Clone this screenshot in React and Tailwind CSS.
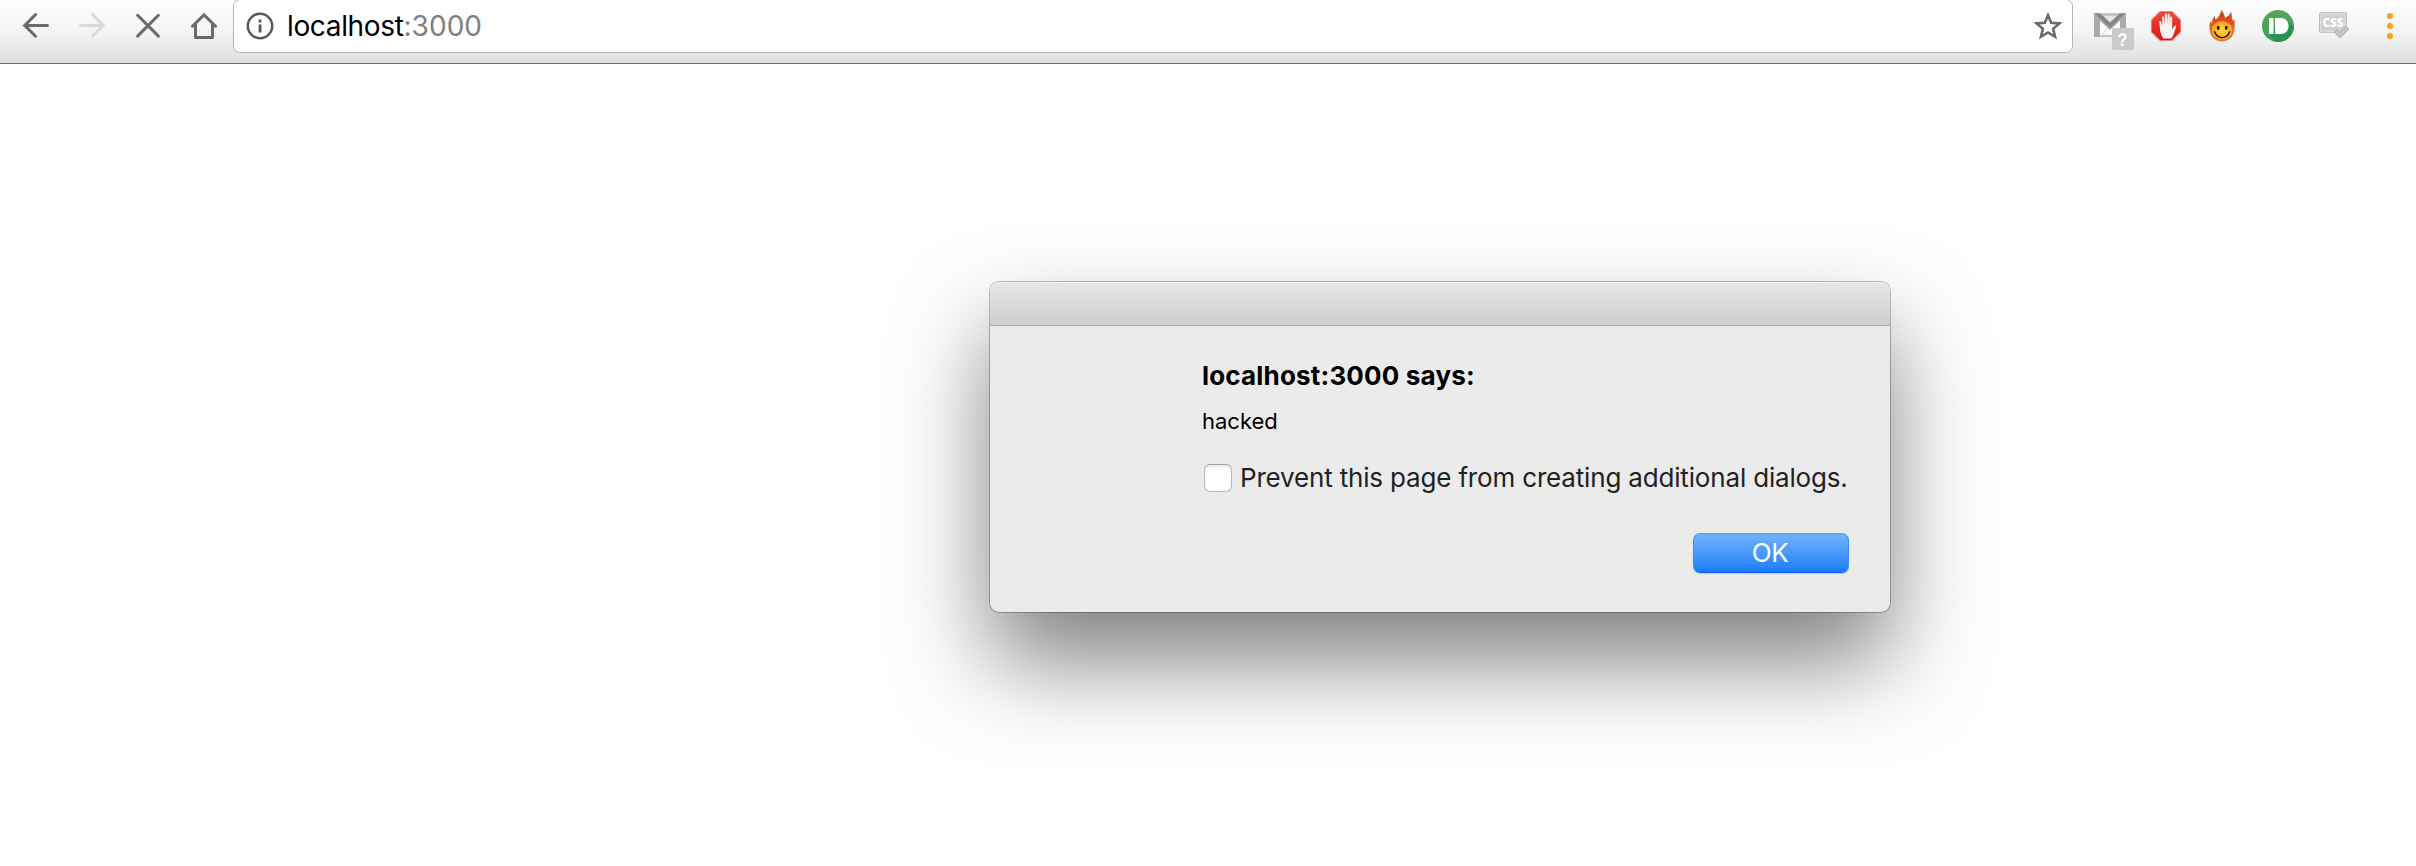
function NavCell({ children }) {
  return <div className="flex h-[63px] w-14 shrink-0 items-start justify-center">{children}</div>;
}

function BackIcon() {
  return (
    <svg viewBox="0 0 56 63" className="h-[63px] w-14" fill="none" stroke="#6a6a6a" strokeWidth="3" strokeLinecap="round">
      <path d="M39.5 25.4H16.5M27.5 14.6L16.7 25.4L27.5 36.2" />
    </svg>
  );
}

function ForwardIcon() {
  return (
    <svg viewBox="0 0 56 63" className="h-[63px] w-14" fill="none" stroke="#d9d9d9" strokeWidth="3" strokeLinecap="round">
      <path d="M16.5 25.4H39.5M28.5 14.6L39.3 25.4L28.5 36.2" />
    </svg>
  );
}

function StopIcon() {
  return (
    <svg viewBox="0 0 56 63" className="h-[63px] w-14" fill="none" stroke="#6a6a6a" strokeWidth="3" strokeLinecap="round">
      <path d="M17.6 15.3L38.4 36.1M38.4 15.3L17.6 36.1" />
    </svg>
  );
}

function HomeIcon() {
  return (
    <svg viewBox="0 0 56 63" className="h-[63px] w-14" fill="none" stroke="#6a6a6a" strokeWidth="3" strokeLinecap="round">
      <path d="M16.4 26.3L28 14.9L39.6 26.3" />
      <path d="M19.5 25V37.5H36.5V25" strokeLinejoin="round" />
    </svg>
  );
}

function InfoIcon() {
  return (
    <svg viewBox="0 0 28 28" className="h-7 w-7" fill="none">
      <circle cx="14" cy="14" r="12.2" stroke="#5a5a5a" strokeWidth="2.5" />
      <path d="M12.6 7.6h2.9v2.9h-2.9zM12.6 12.6h2.9v7.8h-2.9z" fill="#5a5a5a" />
    </svg>
  );
}

function StarIcon() {
  return (
    <svg viewBox="0 0 30 30" className="h-[30px] w-[30px]" fill="none" stroke="#6a6a6a" strokeWidth="2.6">
      <path d="M15 4.2L18.2 11.7L26.4 12.4L20.2 17.8L22.1 25.8L15 21.5L7.9 25.8L9.8 17.8L3.6 12.4L11.8 11.7Z" />
    </svg>
  );
}

function MailIcon() {
  return (
    <svg viewBox="0 0 56 63" className="h-[63px] w-14">
      <g transform="translate(10 0)">
        <rect x="2" y="13" width="32" height="24" fill="#c4c4c4" />
        <path d="M8 35V20L18 29L28 20V35Z" fill="#fbfbfb" />
        <path d="M8 16H28L18 25Z" fill="#e6e6e6" />
        <path d="M2 13H8L18 22L28 13H34V37H28V20.5L18 30L8 20.5V37H2Z" fill="#a9a9a9" />
        <path d="M3 13.5L8.5 14L18 23L27.5 14L33 13.5L18 28Z" fill="#858585" />
        <path d="M10 35.5L15 28.5M26 35.5L21 28.5" stroke="#d8d8d8" strokeWidth="1.2" />
        <rect x="20" y="28" width="22" height="22" rx="2" fill="#cacaca" />
        <text x="30.5" y="46.2" textAnchor="middle" fontFamily="Liberation Sans, sans-serif" fontWeight="700" fontSize="18" textLength="10" lengthAdjust="spacingAndGlyphs" fill="#fff">?</text>
      </g>
    </svg>
  );
}

function BlockIcon() {
  return (
    <svg viewBox="0 0 56 63" className="h-[63px] w-14">
      <defs>
        <linearGradient id="block" x1="0" y1="0" x2="0" y2="1">
          <stop offset="0" stopColor="#f5453a" />
          <stop offset="1" stopColor="#d51a18" />
        </linearGradient>
      </defs>
      <path d="M21.8 11H34.2L43 19.8V32.2L34.2 41H21.8L13 32.2V19.8Z" fill="#e9857d" />
      <path d="M22.2 11.9H33.8L42.1 20.2V31.8L33.8 40.1H22.2L13.9 31.8V20.2Z" fill="url(#block)" />
      <path
        transform="matrix(-0.87 0 0 1 53.8 0)"
        d="M23.7 38.6C21 36 19.8 31.5 18.2 27.2C17.7 25.7 19.3 25 20.3 26.2L22.6 29.5V17.8C22.6 16.2 24.8 16.2 24.8 17.8L25.3 25V15.2C25.3 13.4 27.7 13.4 27.7 15.2L28 24.5L28.5 14.7C28.6 13.1 30.9 13.2 30.9 14.8L30.8 25L31.9 17.3C32.2 15.8 34.2 16 34.1 17.6L33.9 26L35.3 21.8C35.8 20.5 37.5 20.9 37.3 22.4C36.7 26 36.8 30.5 35.3 33.8C34.5 36 33.5 37.5 32.5 38.6Z"
        fill="#fbf3f2"
      />
    </svg>
  );
}

function FlameIcon() {
  return (
    <svg viewBox="0 0 56 63" className="h-[63px] w-14">
      <defs>
        <linearGradient id="flame" x1="0" y1="0" x2="0" y2="1">
          <stop offset="0" stopColor="#c9340f" />
          <stop offset="0.5" stopColor="#ee5a22" />
          <stop offset="1" stopColor="#f68a1e" />
        </linearGradient>
        <radialGradient id="face" cx="0.5" cy="0.5" r="0.55">
          <stop offset="0" stopColor="#ffd93a" />
          <stop offset="0.6" stopColor="#fcb426" />
          <stop offset="1" stopColor="#f08a1c" />
        </radialGradient>
      </defs>
      <path
        d="M27.6 10.5C29.2 13 30.3 15.5 31 18.3C32.5 17.5 35 16 37.2 12.7C37 16.5 38 18.8 38.7 21.5C39.5 21 39.8 20.4 40 19.8C40.5 23.5 40.3 26.5 40 29.5C39.6 36.5 34.5 41 28 41C21.5 41 16.4 36.5 16 29.5C15.6 26 16 24 16.6 21.8C17 23 17.4 23.4 18 23.6C18.3 20.8 19 18.5 20.6 16.5C20.6 18 21 19 21.8 19.7C24.6 17.5 26.9 14.5 27.6 10.5Z"
        fill="url(#flame)"
        stroke="#a85a28"
        strokeWidth="0.6"
      />
      <ellipse cx="28" cy="30.5" rx="10.6" ry="9.6" fill="url(#face)" />
      <ellipse cx="24.2" cy="27.8" rx="1.4" ry="2.1" fill="#1e1508" />
      <ellipse cx="32.2" cy="27.8" rx="1.4" ry="2.1" fill="#1e1508" />
      <path d="M20.7 31.8C23.5 39.5 32.8 39.5 35.6 31.8" fill="none" stroke="#1e1508" strokeWidth="1.4" strokeLinecap="round" />
    </svg>
  );
}

function BulletIcon() {
  return (
    <svg viewBox="0 0 56 63" className="h-[63px] w-14">
      <defs>
        <linearGradient id="bullet" x1="0" y1="0" x2="0" y2="1">
          <stop offset="0" stopColor="#55a757" />
          <stop offset="1" stopColor="#3f9d58" />
        </linearGradient>
        <clipPath id="bulletClip">
          <circle cx="28" cy="26" r="16" />
        </clipPath>
      </defs>
      <circle cx="28" cy="26" r="16" fill="url(#bullet)" />
      <g clipPath="url(#bulletClip)">
        <path d="M19 34L35.5 19L50 33V46H30Z" fill="#2b9152" />
      </g>
      <rect x="19" y="18" width="4.6" height="16" rx="1" fill="#fff" />
      <path d="M26 18H30.5C35.5 18 38.6 21.5 38.6 26C38.6 30.5 35.5 34 30.5 34H26C25.4 34 25 33.6 25 33V19C25 18.4 25.4 18 26 18Z" fill="#fff" />
    </svg>
  );
}

function CssIcon() {
  return (
    <svg viewBox="0 0 56 63" className="h-[63px] w-14">
      <rect x="13.5" y="12.6" width="27" height="19.6" rx="1" fill="#d0d0d0" stroke="#bcbcbc" strokeWidth="1" />
      <rect x="14.6" y="13.7" width="24.8" height="17.4" fill="none" stroke="#e2e2e2" />
      <text x="27" y="26.9" textAnchor="middle" fontFamily="Open Sans, sans-serif" fontWeight="800" fontSize="13" textLength="21" lengthAdjust="spacingAndGlyphs" fill="#fff">CSS</text>
      <path d="M28.2 32.2L31 29.6L34 32.4L39.8 26.4L42.8 29.2L34.2 37.8Z" fill="#c6c6c6" stroke="#a6a6a6" strokeWidth="0.9" strokeLinejoin="round" />
    </svg>
  );
}

function MenuIcon() {
  return (
    <svg viewBox="0 0 56 63" className="h-[63px] w-14" fill="#f5a623">
      <circle cx="28" cy="16" r="3.1" />
      <circle cx="28" cy="26" r="3.1" />
      <circle cx="28" cy="36" r="3.1" />
    </svg>
  );
}

function Toolbar() {
  return (
    <header className="flex h-16 items-start overflow-hidden border-b border-[#6e6e6e] bg-linear-to-b from-white via-[#f4f4f4] to-[#e0e0e0] pl-2">
      <NavCell><BackIcon /></NavCell>
      <NavCell><ForwardIcon /></NavCell>
      <NavCell><StopIcon /></NavCell>
      <NavCell><HomeIcon /></NavCell>
      <div className="-mt-px ml-[1px] flex h-[54px] w-[1840px] shrink-0 items-center rounded-[7px] border border-[#b4b4b4] bg-white pl-[12px] pr-[9px]">
        <InfoIcon />
        <div className="ml-[13px] flex-1 whitespace-nowrap font-['Inter',sans-serif] text-[28px] leading-[34px] tracking-[-0.35px] text-black">
          localhost<span className="tracking-[0.05px] text-[#808080]">:3000</span>
        </div>
        <StarIcon />
      </div>
      <div className="ml-[9px] flex">
        <NavCell><MailIcon /></NavCell>
        <NavCell><BlockIcon /></NavCell>
        <NavCell><FlameIcon /></NavCell>
        <NavCell><BulletIcon /></NavCell>
        <NavCell><CssIcon /></NavCell>
        <NavCell><MenuIcon /></NavCell>
      </div>
    </header>
  );
}

function AlertDialog() {
  return (
    <section className="ml-[990px] mt-[218px] flex h-[330px] w-[900px] flex-col rounded-[9px] bg-[#ebebeb] font-['Inter',sans-serif] shadow-[0_0_0_1px_rgba(0,0,0,0.26),0_49px_94px_rgba(0,0,0,0.5)]">
      <div className="h-[44px] shrink-0 rounded-t-[9px] border-b border-[#a9a7a9] bg-linear-to-b from-[#e8e6e9] to-[#cfcdd0] shadow-[inset_0_1px_0_#f4f3f4]" />
      <div className="flex flex-1 flex-col pl-[212px] pr-[41px]">
        <h1 className="mt-[33px] whitespace-nowrap text-[26px] font-bold leading-[34px] tracking-[0.18px] text-black">localhost:3000 says:</h1>
        <p className="mt-[13px] whitespace-nowrap text-[22px] leading-[30px] text-black">hacked</p>
        <label className="mt-[24px] flex items-center whitespace-nowrap text-[26px] leading-[34px] tracking-[-0.17px] text-[#222]">
          <span className="ml-[2px] mr-[8px] h-7 w-7 shrink-0 rounded-[6px] border border-[#b9b9b9] border-t-[#a2a2a2] bg-white shadow-[inset_0_2px_2px_rgba(0,0,0,0.08)]" />
          <span className="mt-px">Prevent this page from creating additional dialogs.</span>
        </label>
        <button className="mt-[38px] h-10 w-[156px] self-end rounded-[7px] border border-[#3b8ef0] border-b-[#0f62f5] border-t-[#519ff2] bg-linear-to-b from-[#6fb3f8] to-[#177cfc] pr-[2px] text-[26px] leading-[36px] tracking-[-0.3px] text-white shadow-[0_1px_1px_rgba(0,0,0,0.15)]">
          OK
        </button>
      </div>
    </section>
  );
}

export default function App() {
  return (
    <div className="h-[866px] w-[2416px] overflow-hidden bg-white">
      <Toolbar />
      <AlertDialog />
    </div>
  );
}
